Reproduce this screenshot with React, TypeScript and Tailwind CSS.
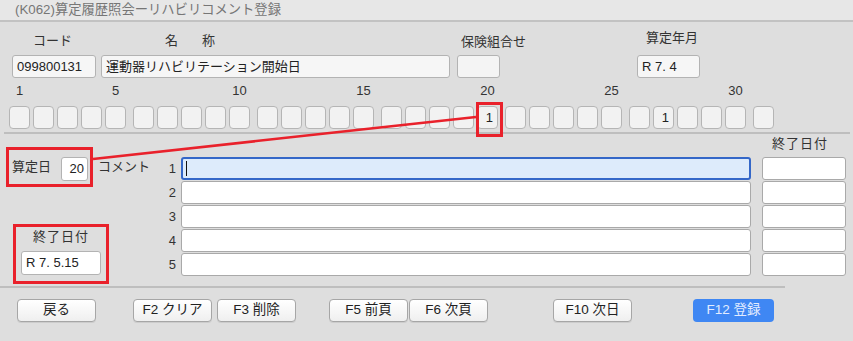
import React from 'react'

const days = Array.from({ length: 31 }, (_, i) => i + 1)
const dayValues: Record<number, string> = { 20: '1', 27: '1' }
const groups = [0, 1, 2, 3, 4, 5, 6].map((g) => days.slice(g * 5, g * 5 + 5))

const Field = ({ className = '', children }: { className?: string; children?: React.ReactNode }) => (
  <div
    className={`h-[23px] rounded-[3px] border border-[#b3b3b3] bg-[#f4f4f4] flex items-center px-[4px] text-[13px] text-[#222] ${className}`}
  >
    {children}
  </div>
)

const Btn = ({ label, className = '', primary = false }: { label: string; className?: string; primary?: boolean }) => (
  <div
    className={`h-[23px] w-[79px] rounded-[4px] flex items-center justify-center text-[13.5px] ${
      primary
        ? 'bg-[#3f87f3] text-[#e2ecff]'
        : 'border border-[#a6a6a6] bg-gradient-to-b from-white to-[#efefef] text-[#222] shadow-[0_1px_0_rgba(0,0,0,0.08)]'
    } ${className}`}
  >
    {label}
  </div>
)

const App = () => {
  return (
    <div className="relative w-[853px] h-[341px] overflow-hidden bg-[#dedede] text-[13px] text-[#333] font-['Liberation_Sans','Noto_Sans_CJK_JP',sans-serif]">
      {/* title bar */}
      <div className="h-[22px] bg-[#e7e7e7] border-b-2 border-[#c2c2c2] pl-[15px] flex items-center text-[13.3px] text-[#767676] leading-none">
        (K062)算定履歴照会ーリハビリコメント登録
      </div>

      {/* header labels */}
      <div className="flex h-[31px] leading-[16px]">
        <div className="w-[150px] pl-[33px] pt-[11px]">コード</div>
        <div className="w-[311px] pl-[15px] pt-[11px]">
          名<span className="ml-[24px]">称</span>
        </div>
        <div className="w-[185px] pt-[12px]">保険組合せ</div>
        <div className="pt-[8px]">算定年月</div>
      </div>

      {/* header inputs */}
      <div className="flex mt-[2px]">
        <Field className="ml-[12px] w-[84px] bg-[#f6f6f6]">099800131</Field>
        <Field className="ml-[5px] w-[349px] bg-[#f6f6f6]">運動器リハビリテーション開始日</Field>
        <Field className="ml-[7px] w-[43px]" />
        <Field className="ml-[137px] w-[63px] bg-[#f6f6f6]">R 7. 4</Field>
      </div>

      {/* day grid */}
      <div className="flex gap-[7px] pl-[9px] mt-[5px]">
        {groups.map((g, gi) => (
          <div key={gi} className="flex gap-[3px]">
            {g.map((d) => (
              <div key={d} className="flex flex-col items-center w-[21px]">
                <div className="h-[16px] leading-[16px] whitespace-nowrap text-[#333]">
                  {d === 1 || d % 5 === 0 ? d : ''}
                </div>
                <div className="relative mt-[7px] h-[23px] w-[21px] rounded-[4px] border border-[#b5b5b5] bg-[#f2f2f2] flex items-center justify-end pr-[4px] text-[#222]">
                  {dayValues[d] ?? ''}
                  {d === 20 && (
                    <span className="absolute left-[-2px] top-[-5px] w-[27px] h-[35px] border-[3px] border-[#e9212b]" />
                  )}
                </div>
              </div>
            ))}
          </div>
        ))}
      </div>

      <div className="ml-[4px] mr-[3px] mt-[3px] h-[2px] bg-[#bebebe]" />

      {/* lower section */}
      <div className="flex h-[150px]">
        <div className="w-[165px] flex flex-col">
          <div className="flex items-center mt-[13px]">
            <div className="ml-[6px] w-[87px] h-[40px] border-[3px] border-[#e9212b] flex items-center pl-[3px] pr-[2px] justify-between">
              <span>算定日</span>
              <div className="mt-[4px] h-[24px] w-[27px] rounded-[3px] border border-[#b3b3b3] bg-white flex items-center justify-end pr-[3px] text-[#222]">
                20
              </div>
            </div>
            <span className="ml-[5px]">コメント</span>
          </div>
          <div className="ml-[13px] mt-[37px] w-[96px] h-[60px] border-[3px] border-[#e9212b] flex flex-col items-center">
            <div className="mt-[2px] h-[16px] leading-[16px] tracking-[1px]">終了日付</div>
            <div className="mt-[6px] h-[24px] w-[80px] rounded-[3px] border border-[#b3b3b3] bg-white flex items-center pl-[4px] text-[#222]">
              R 7. 5.15
            </div>
          </div>
        </div>

        <div className="flex flex-col">
          <div className="h-[23px] pl-[607px] pt-[2px] leading-[16px] tracking-[1px]">終了日付</div>
          <div className="flex flex-col gap-[1px]">
            {[1, 2, 3, 4, 5].map((n) => (
              <div key={n} className="flex items-center h-[23px]">
                <span className="w-[11px] text-right">{n}</span>
                {n === 1 ? (
                  <div className="ml-[5px] w-[570px] h-[23px] rounded-[3px] border-2 border-[#3467c8] bg-[#ddebfb] flex items-center pl-[3px]">
                    <span className="w-[1px] h-[15px] bg-[#111]" />
                  </div>
                ) : (
                  <div className="ml-[5px] w-[570px] h-[23px] rounded-[3px] border border-[#a9a9a9] bg-white" />
                )}
                <div className="ml-[11px] w-[84px] h-[23px] rounded-[3px] border border-[#a9a9a9] bg-white" />
              </div>
            ))}
          </div>
        </div>
      </div>

      <div className="mt-[2px] w-[785px] h-[2px] bg-[#bebebe]" />

      {/* buttons */}
      <div className="flex mt-[11px]">
        <Btn label="戻る" className="ml-[17px]" />
        <Btn label="F2 クリア" className="ml-[37px]" />
        <Btn label="F3 削除" className="ml-[5px]" />
        <Btn label="F5 前頁" className="ml-[33px]" />
        <Btn label="F6 次頁" className="ml-[1px]" />
        <Btn label="F10 次日" className="ml-[65px]" />
        <Btn label="F12 登録" primary className="ml-[61px] w-[81px]" />
      </div>

      {/* annotation line */}
      <svg className="absolute left-0 top-0 pointer-events-none" width="853" height="341">
        <line x1="93" y1="159" x2="476" y2="117" stroke="#e9212b" strokeWidth="2.5" />
      </svg>
    </div>
  )
}

export default App
